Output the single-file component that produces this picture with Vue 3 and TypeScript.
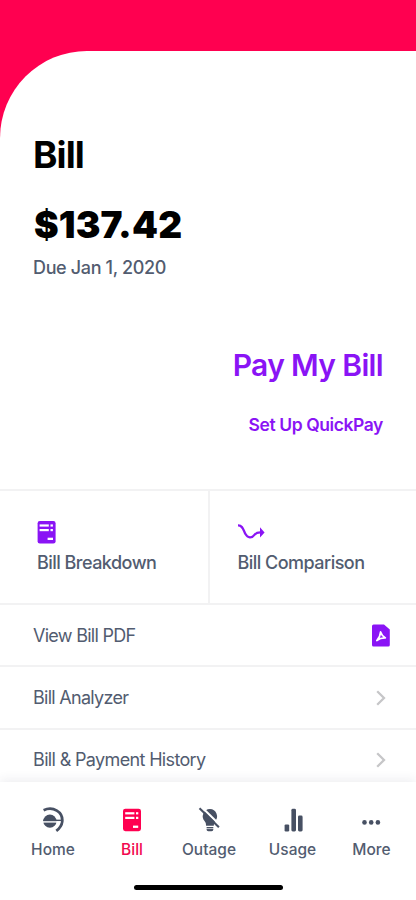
<script setup lang="ts">
interface Row {
  label: string
  kind: 'pdf' | 'link'
  cls: string
}

const rows: Row[] = [
  { label: 'View Bill PDF', kind: 'pdf', cls: 'row-pdf' },
  { label: 'Bill Analyzer', kind: 'link', cls: 'row-analyzer' },
  { label: 'Bill & Payment History', kind: 'link', cls: 'row-history' },
]
</script>

<template>
  <div class="screen">
    <main class="sheet">
      <section class="summary">
        <h1 class="title">Bill</h1>
        <div class="amount">$137.42</div>
        <div class="due">Due Jan 1, 2020</div>
      </section>
      <section class="actions">
        <a class="pay">Pay My Bill</a>
        <a class="quick">Set Up QuickPay</a>
      </section>
      <section class="tiles">
        <div class="tile tile-left">
          <svg class="tile-icon" width="20" height="24" viewBox="0 0 20 24">
            <rect x="0.6" y="1" width="18" height="22.4" rx="2.2" fill="#8a14f5" />
            <g fill="#fff">
              <rect x="2.6" y="4.4" width="9.2" height="2.2" />
              <rect x="13.5" y="4.4" width="2.4" height="2.2" />
              <rect x="2.6" y="9" width="9.2" height="2.2" />
              <rect x="13.5" y="9" width="2.4" height="2.2" />
              <rect x="10.6" y="17.7" width="5.4" height="2.3" />
            </g>
          </svg>
          <span class="tile-label breakdown">Bill Breakdown</span>
        </div>
        <div class="tile tile-right">
          <svg class="tile-icon" width="28" height="24" viewBox="0 0 28 24">
            <path d="M0 5.3C4.9 5.1 5.3 10.2 7.5 14.1C9.6 18.2 14 18.4 16.4 14.9C18.2 12.6 19.4 12.4 22.4 12.4" fill="none" stroke="#8a14f5" stroke-width="2.2" />
            <path d="M22 7.3L26.6 12.4L22 17.5Z" fill="#8a14f5" />
          </svg>
          <span class="tile-label comparison">Bill Comparison</span>
        </div>
      </section>
      <ul class="rows">
        <li v-for="row in rows" :key="row.label" class="row">
          <span class="row-label" :class="row.cls">{{ row.label }}</span>
          <svg v-if="row.kind === 'pdf'" class="pdf" width="18" height="23" viewBox="0 0 18 23">
            <path d="M1.6 0.4H12L17.8 5.4V21A1.6 1.6 0 0 1 16.2 22.6H1.6A1.6 1.6 0 0 1 0 21V2A1.6 1.6 0 0 1 1.6 0.4Z" fill="#8a14f5" />
            <path d="M8.6 7.9Q9.6 11.4 13.4 13.9Q8.6 13.7 4.8 16.5Q8.4 12.6 8.6 7.9Z" fill="none" stroke="#fff" stroke-width="1.7" stroke-linejoin="round" stroke-linecap="round" />
          </svg>
          <svg v-else class="chevron" width="10" height="16" viewBox="0 0 10 16">
            <path d="M1.2 1.2L8 8L1.2 14.8" fill="none" stroke="#c6c6c8" stroke-width="2.3" />
          </svg>
        </li>
      </ul>
    </main>

    <nav class="tabs">
      <a class="tab home">
        <svg width="26" height="26" viewBox="0 0 26 26">
          <path d="M3.6 3.2C13 -1 23.2 4.8 22.2 14.6C21.7 18.8 19.6 21.4 16.3 23.8" fill="none" stroke="#475063" stroke-width="2.8" />
          <circle cx="9.9" cy="14.2" r="6.6" fill="#475063" />
          <path d="M3.2 13.4H21.5" stroke="#475063" stroke-width="1.5" />
          <path d="M2.6 14.9H20.6" stroke="#fff" stroke-width="1.4" />
        </svg>
        <span>Home</span>
      </a>
      <a class="tab bill">
        <svg width="26" height="26" viewBox="0 0 26 26">
          <rect x="4" y="1.7" width="18" height="22.5" rx="2.4" fill="#ff0050" />
          <g fill="#fff">
            <rect x="6.2" y="5.2" width="9.2" height="2.2" />
            <rect x="17" y="5.2" width="2.3" height="2.2" />
            <rect x="6.2" y="9.8" width="9.2" height="2.2" />
            <rect x="17" y="9.8" width="2.3" height="2.2" />
            <rect x="14" y="18.6" width="5.2" height="2.3" />
          </g>
        </svg>
        <span>Bill</span>
      </a>
      <a class="tab outage">
        <svg width="26" height="26" viewBox="0 0 26 26">
          <path d="M13.9 2A7.3 7.3 0 0 1 18.9 14.4Q17.8 15.6 17.8 18.7H10.1Q10.1 15.6 8.7 14.2A7.3 7.3 0 0 1 13.9 2Z" fill="#475063" />
          <path d="M10.6 20H17.3V22.5Q17.3 24.2 15.6 24.2H12.3Q10.6 24.2 10.6 22.5Z" fill="#475063" />
          <path d="M10 21.6H18" stroke="#fff" stroke-width="0.7" />
          <path d="M5.3 -0.2L24.7 18.8" stroke="#fff" stroke-width="2.2" />
          <path d="M3.5 1.2L22.9 20.2" stroke="#475063" stroke-width="2.1" />
        </svg>
        <span>Outage</span>
      </a>
      <a class="tab usage">
        <svg width="26" height="26" viewBox="0 0 26 26">
          <g fill="#475063">
            <rect x="4.6" y="17.4" width="4.6" height="7" rx="1.2" />
            <rect x="11.4" y="1.8" width="4.6" height="22.6" rx="1.4" />
            <rect x="18" y="8.6" width="4.6" height="15.8" rx="1.4" />
          </g>
        </svg>
        <span>Usage</span>
      </a>
      <a class="tab more">
        <svg width="26" height="26" viewBox="0 0 26 26">
          <g fill="#475063">
            <circle cx="5.5" cy="15.4" r="2.3" />
            <circle cx="12.2" cy="15.4" r="2.3" />
            <circle cx="18.9" cy="15.4" r="2.3" />
          </g>
        </svg>
        <span>More</span>
      </a>
      <div class="home-indicator"></div>
    </nav>
  </div>
</template>

<style>
body {
  margin: 0;
}
</style>

<style scoped>
.screen {
  width: 416px;
  height: 900px;
  box-sizing: border-box;
  padding-top: 51px;
  display: flex;
  flex-direction: column;
  overflow: hidden;
  background: #ff0050;
  font-family: Inter, "Liberation Sans", sans-serif;
  color: #525c70;
}
.sheet {
  flex: 1;
  min-height: 0;
  overflow: hidden;
  background: #fff;
  border-top-left-radius: 87px;
}
.summary {
  height: 269px;
  box-sizing: border-box;
  padding: 80px 0 0 33px;
  white-space: nowrap;
}
.title {
  margin: 0;
  font-size: 37px;
  line-height: 48px;
  font-weight: 700;
  letter-spacing: -0.9px;
  color: #000;
}
.amount {
  margin-top: 21.5px;
  padding-left: 1px;
  font-size: 37px;
  line-height: 48px;
  font-weight: 900;
  letter-spacing: 0.15px;
  color: #000;
}
.due {
  margin-top: 7.5px;
  font-size: 18px;
  line-height: 24px;
  font-weight: 500;
  letter-spacing: -0.35px;
}
.actions {
  height: 169px;
  box-sizing: border-box;
  padding: 25px 33px 0 0;
  display: flex;
  flex-direction: column;
  align-items: flex-end;
  color: #8a14f5;
  font-weight: 600;
}
.pay {
  font-size: 30px;
  line-height: 40px;
  letter-spacing: -0.65px;
}
.quick {
  margin-top: 28px;
  font-size: 17.5px;
  line-height: 24px;
  letter-spacing: -0.42px;
}
.tiles {
  height: 116px;
  box-sizing: border-box;
  display: grid;
  grid-template-columns: 209.5px 1fr;
  border-top: 2px solid #f2f2f3;
  border-bottom: 2px solid #f2f2f3;
}
.tile {
  box-sizing: border-box;
  padding-top: 29px;
  display: flex;
  flex-direction: column;
  align-items: flex-start;
}
.tile-left {
  padding-left: 37px;
  border-right: 2px solid #f2f2f3;
}
.tile-right {
  padding-left: 28px;
}
.tile-icon {
  display: block;
}
.tile-label {
  margin-top: 7px;
  font-size: 18px;
  line-height: 24px;
  font-weight: 500;
  letter-spacing: -0.53px;
}
.rows {
  margin: 0;
  padding: 0;
  list-style: none;
}
.row {
  height: 62.4px;
  box-sizing: border-box;
  padding: 1px 26px 0 33px;
  display: flex;
  align-items: center;
  justify-content: space-between;
  border-bottom: 2px solid #f2f2f3;
}
.row-label {
  font-size: 18px;
  line-height: 24px;
  letter-spacing: -0.65px;
}
.row-analyzer,
.row-pdf {
  letter-spacing: -0.72px;
}
.chevron {
  margin-right: 4px;
}
.tabs {
  position: relative;
  height: 118px;
  box-sizing: border-box;
  padding: 25px 0 0 7px;
  display: grid;
  grid-template-columns: 92px 66px 88px 79px 79px;
  background: #fff;
  box-shadow: 0 -2px 10px rgba(60, 60, 90, 0.09);
}
.tab {
  display: flex;
  flex-direction: column;
  align-items: center;
  height: 56px;
  font-size: 15.5px;
  line-height: 24px;
  font-weight: 500;
}
.tab span {
  margin-top: 4.5px;
}
.tab.bill {
  color: #f2094f;
}
.home-indicator {
  position: absolute;
  left: 134px;
  top: 103px;
  width: 149px;
  height: 5px;
  border-radius: 3px;
  background: #000;
}
</style>
